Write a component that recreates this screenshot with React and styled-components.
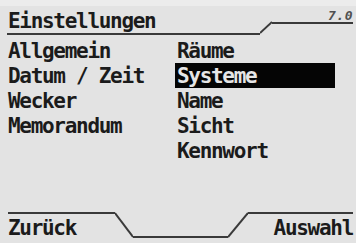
import React from 'react';
import styled, { createGlobalStyle } from 'styled-components';

const GlobalStyle = createGlobalStyle`
  html, body {
    margin: 0;
    padding: 0;
    background: #e3e3e3;
  }
`;

const Screen = styled.div`
  width: 356px;
  height: 243px;
  box-sizing: border-box;
  display: flex;
  flex-direction: column;
  background: #e3e3e3;
  border-top: 6px solid #ececec;
  padding: 3px 3px 0 8px;
  color: #1b1b1b;
  font-family: 'DejaVu Sans Mono', 'Liberation Mono', monospace;
  font-weight: bold;
  font-size: 21px;
  letter-spacing: -1.3px;
  overflow: hidden;
`;

const Header = styled.div`
  display: flex;
  align-items: flex-start;
`;

const Title = styled.div`
  width: 252px;
  height: 24px;
  line-height: 25px;
  border-bottom: 2px solid #3a3a3a;
  margin-left: -1px;
  padding-left: 1px;
  white-space: nowrap;
`;

const Slant = styled.svg`
  flex: none;
  display: block;
  margin-top: ${(p) => p.$top}px;
`;

const Version = styled.div`
  flex: 1;
  height: 13px;
  border-bottom: 2px solid #3a3a3a;
  text-align: right;
  font-size: 13px;
  line-height: 13px;
  letter-spacing: 0.5px;
  color: #505050;
  font-style: italic;
`;

const Body = styled.div`
  flex: 1;
  display: grid;
  grid-template-columns: 167px 160px;
  margin-top: 3px;
`;

const Column = styled.ul`
  list-style: none;
  margin: 0;
  padding: 0;
`;

const Item = styled.li`
  height: 25px;
  line-height: 26px;
  padding-left: ${(p) => (p.$indent ? 2 : 0)}px;
  white-space: nowrap;
  background: ${(p) => (p.$selected ? '#050505' : 'transparent')};
  color: ${(p) => (p.$selected ? '#e6e6e6' : 'inherit')};
`;

const Footer = styled.div`
  display: flex;
  align-items: flex-start;
  height: 31px;
`;

const SoftKey = styled.div`
  width: ${(p) => p.$width}px;
  border-top: 2px solid #3a3a3a;
  padding-top: 2px;
  line-height: 25px;
  text-align: ${(p) => p.$align};
  white-space: nowrap;
`;

const Gap = styled.div`
  flex: 1;
  height: 24px;
  border-bottom: 2px solid #3a3a3a;
`;

const leftItems = ['Allgemein', 'Datum / Zeit', 'Wecker', 'Memorandum'];
const rightItems = ['Räume', 'Systeme', 'Name', 'Sicht', 'Kennwort'];
const selected = 'Systeme';

function SlantLine({ width, height, from, to, top }) {
  return (
    <Slant $top={top} width={width} height={height} viewBox={`0 0 ${width} ${height}`}>
      <polyline
        points={`0,${from} ${width},${to}`}
        fill="none"
        stroke="#3a3a3a"
        strokeWidth="2"
      />
    </Slant>
  );
}

export default function App() {
  return (
    <>
      <GlobalStyle />
      <Screen>
        <Header>
          <Title>Einstellungen</Title>
          <SlantLine width={12} height={14} from={12} to={1} top={12} />
          <Version>7.0</Version>
        </Header>
        <Body>
          <Column>
            {leftItems.map((label) => (
              <Item key={label}>{label}</Item>
            ))}
          </Column>
          <Column>
            {rightItems.map((label) => (
              <Item key={label} $indent $selected={label === selected}>
                {label}
              </Item>
            ))}
          </Column>
        </Body>
        <Footer>
          <SoftKey $width={107} $align="left">Zurück</SoftKey>
          <SlantLine width={18} height={26} from={1} to={25} top={0} />
          <Gap />
          <SlantLine width={20} height={26} from={25} to={1} top={0} />
          <SoftKey $width={105} $align="right">Auswahl</SoftKey>
        </Footer>
      </Screen>
    </>
  );
}
